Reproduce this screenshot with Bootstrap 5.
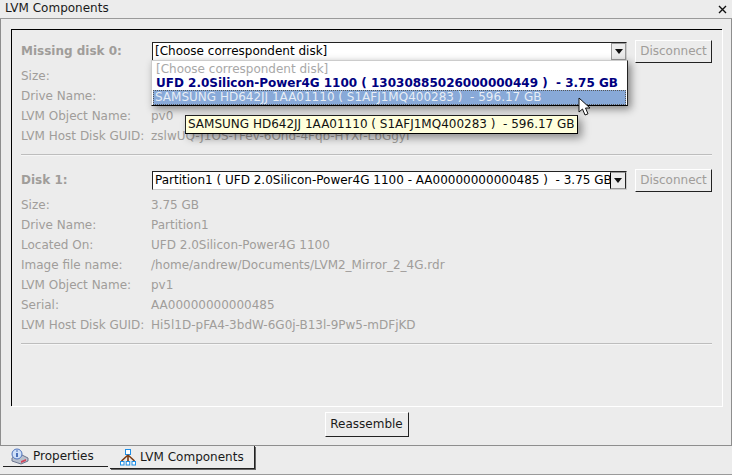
<!DOCTYPE html>
<html lang="en"><head><meta charset="utf-8"><title>LVM Components</title>
<link href="https://cdn.jsdelivr.net/npm/bootstrap@5.3.0/dist/css/bootstrap.min.css" rel="stylesheet">
<style>
html,body{height:100%;overflow:hidden}
body{background:#ececec;font:12px/14px "DejaVu Sans",sans-serif;color:#000;width:732px;height:475px;position:relative}
.tbar{height:19px;border-bottom:1px solid #9a9a9a;padding:1px 5px 0 5px;color:#1a1a1a}
.tbar svg{margin-top:4px}
.shell{height:427px;border:solid #8e8e8e;border-width:0 1px 1px 1px;padding:10px 9px 0 10px}
.panel{height:377px;border:solid #000;border-width:1px 0 0 1px;box-shadow:1px 1px 0 #fff;padding:8px 10px 0 9px}
.headrow{height:26px;margin-bottom:2px}
.headrow.second{margin-top:11px}
.lab{width:130px;flex:none}
.dim{color:#a09d9a}
.heading{font-weight:700;color:#a09d9a}
.frow{height:20px;line-height:20px;white-space:nowrap}
.combo{width:475px;height:19px;margin-left:1px;background:#fff;border:solid;border-width:1px;border-color:#222 #ccc #ccc #222;line-height:16px;padding-left:2px;overflow:hidden;white-space:nowrap;position:relative;flex:none}
.arrowbox{position:absolute;right:0;top:0;bottom:0;width:15px;background:#ececec;border:1px solid #9a9a9a;display:flex;align-items:center;justify-content:center}
.arrowbox.strong{border-color:#999 #222 #999 #000;width:16px}
.gbtn{margin-left:8px;width:77px;height:23px;background:#ececec;border:1px solid;border-color:#fff #222 #222 #fff;color:#a09d9a;line-height:20px;text-align:center;flex:none}
.rule{height:2px;margin:8px 0 0;border-top:1px solid #bdbdbd;border-bottom:1px solid #f6f6f6;width:691px}
.footrow{height:39px;padding-top:6px}
.okbtn{width:84px;height:25px;background:#ececec;border:1px solid;border-color:#fff #222 #222 #fff;line-height:22px;text-align:center;color:#1a1a1a}
.tabs{padding-left:3px;height:23px;color:#1a1a1a}
.tabi{height:22px;display:flex;align-items:center;gap:4px;border-bottom:1px solid #222;background:#ececec}
.tabi.one{width:105px;padding-left:8px;height:21px}
.tabi.two{width:145px;margin-left:2px;padding-left:10px;border-right:1px solid #222;box-shadow:1px 1px 0 #666;height:23px}
.endline{position:absolute;left:0;right:0;top:474px;height:1px;background:#9a9a9a}
.popup{position:absolute;left:151px;top:60px;width:477px;height:46px;background:#fff;border:1px solid #ccc;border-right-color:#222;border-bottom-color:#000;box-shadow:3px 3px 8px rgba(0,0,0,.45);padding:0 1px 0 1px;white-space:nowrap}
.opt{height:14px;line-height:14px;padding-left:3px}
.opt.ghost{color:#a8a8a8;height:15px;padding-top:1px}
.opt.bold{color:#00007f;font-weight:700}
.opt.sel{background:#88a9d8;color:#e6edf6;border:1px dotted #555;height:15px;line-height:13px;padding-left:1px}
.tip{position:absolute;left:185px;top:115px;height:19px;width:393px;background:#ffffdc;border:1px solid;border-color:#222 #000 #000 #222;line-height:17px;padding-left:2px;white-space:nowrap;color:#111;box-shadow:4px 4px 8px rgba(0,0,0,.4)}
.ptr{position:absolute;left:578px;top:97px}
</style></head>
<body>
<div class="tbar d-flex justify-content-between"><span>LVM Components</span><svg width="9" height="9" viewBox="0 0 9 9"><path d="M1 1 8 8M8 1 1 8" stroke="#111" stroke-width="1.4" fill="none"/></svg></div>
<div class="shell">
  <div class="panel">
    <div class="d-flex align-items-center headrow"><div class="lab heading">Missing disk 0:</div><div class="combo">[Choose correspondent disk]<span class="arrowbox"><svg width="8" height="5"><path d="M0 0H8L4 5Z" fill="#111"/></svg></span></div><div class="gbtn">Disconnect</div></div>
    <div class="d-flex frow dim"><div class="lab">Size:</div><div></div></div>
    <div class="d-flex frow dim"><div class="lab">Drive Name:</div><div></div></div>
    <div class="d-flex frow dim"><div class="lab">LVM Object Name:</div><div>pv0</div></div>
    <div class="d-flex frow dim"><div class="lab">LVM Host Disk GUID:</div><div>zslwUQ-J1OS-TFev-6Ond-4Fqb-HYXr-LbGgyI</div></div>
    <div class="rule"></div>
    <div class="d-flex align-items-center headrow second"><div class="lab heading">Disk 1:</div><div class="combo">Partition1 ( UFD 2.0Silicon-Power4G 1100 - AA00000000000485 )&nbsp; - 3.75 GB<span class="arrowbox strong"><svg width="8" height="5"><path d="M0 0H8L4 5Z" fill="#111"/></svg></span></div><div class="gbtn">Disconnect</div></div>
    <div class="d-flex frow dim"><div class="lab">Size:</div><div>3.75 GB</div></div>
    <div class="d-flex frow dim"><div class="lab">Drive Name:</div><div>Partition1</div></div>
    <div class="d-flex frow dim"><div class="lab">Located On:</div><div>UFD 2.0Silicon-Power4G 1100</div></div>
    <div class="d-flex frow dim"><div class="lab">Image file name:</div><div>/home/andrew/Documents/LVM2_Mirror_2_4G.rdr</div></div>
    <div class="d-flex frow dim"><div class="lab">LVM Object Name:</div><div>pv1</div></div>
    <div class="d-flex frow dim"><div class="lab">Serial:</div><div>AA00000000000485</div></div>
    <div class="d-flex frow dim"><div class="lab">LVM Host Disk GUID:</div><div>Hi5l1D-pFA4-3bdW-6G0j-B13l-9Pw5-mDFjKD</div></div>
    <div class="rule"></div>
  </div>
  <div class="footrow d-flex justify-content-center"><div class="okbtn">Reassemble</div></div>
</div>
<div class="tabs d-flex">
  <div class="tabi one"><svg width="18" height="17" viewBox="0 0 18 17"><path d="M1 10 9 6l8 4v3l-7 3-9-3Z" fill="#b9c0cc" stroke="#6d7690"/><path d="M10 13l5-2v2l-5 2Z" fill="#d6455a"/><circle cx="6" cy="6" r="5" fill="#cfe0f8" stroke="#4f74bd"/><path d="M6 2.500v1M6 5v4" stroke="#2a54a8" stroke-width="1.6"/></svg><span>Properties</span></div>
  <div class="tabi two"><svg width="16" height="17" viewBox="0 0 16 17"><rect x="5.500" y=".5" width="5" height="5" fill="#fff" stroke="#1e8fe8"/><path d="M8 6 1.500 12M8 6l6.500 6M8 6v6" stroke="#7a3a12" stroke-width="1.6" fill="none"/><rect x=".5" y="12.500" width="3.500" height="3.500" fill="#fff" stroke="#1e8fe8"/><rect x="6.200" y="12.500" width="3.500" height="3.500" fill="#fff" stroke="#1e8fe8"/><rect x="12" y="12.500" width="3.500" height="3.500" fill="#fff" stroke="#1e8fe8"/></svg><span>LVM Components</span></div>
</div>
<div class="endline"></div>
<div class="popup">
  <div class="opt ghost">[Choose correspondent disk]</div>
  <div class="opt bold">UFD 2.0Silicon-Power4G 1100 ( 13030885026000000449 )&nbsp; - 3.75 GB</div>
  <div class="opt sel">SAMSUNG HD642JJ 1AA01110 ( S1AFJ1MQ400283 )&nbsp; - 596.17 GB</div>
</div>
<div class="tip">SAMSUNG HD642JJ 1AA01110 ( S1AFJ1MQ400283 )&nbsp; - 596.17 GB</div>
<svg class="ptr" width="14" height="20" viewBox="0 0 14 20"><path d="M1 1v14l3.500-3 2.500 6 3-1.200-2.500-5.800H12Z" fill="#fff" stroke="#111"/></svg>
</body></html>
